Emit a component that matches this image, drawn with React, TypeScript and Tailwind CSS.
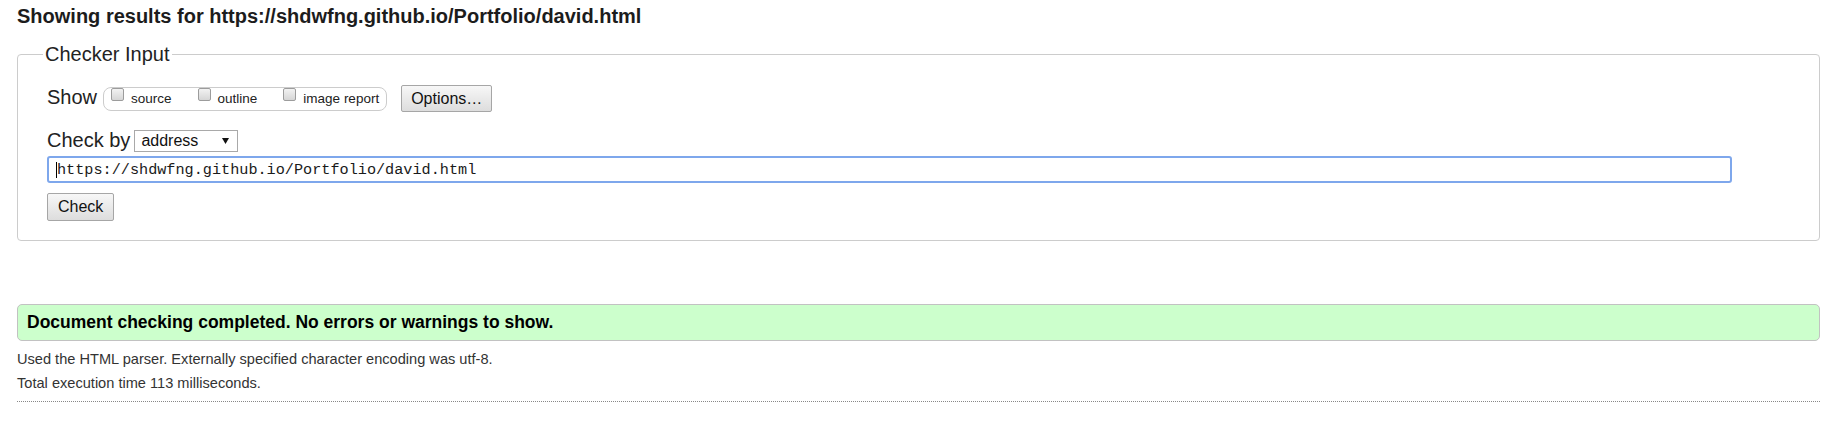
import React from "react"

const sans = { fontFamily: '"Liberation Sans", Arial, sans-serif' }

function FakeCheckbox() {
	return (
		<span className="block w-[13px] h-[13px] shrink-0 rounded-[2px] border border-[#9c9c9c] bg-gradient-to-b from-[#f2f2f2] to-[#d6d6d6]" />
	)
}

function ShowOption({ label, first }: { label: string; first?: boolean }) {
	return (
		<div className={`flex items-start ${first ? "" : "ml-[26px]"}`}>
			<FakeCheckbox />
			<span className="ml-[7px] text-[13.5px] leading-[22px] text-[#222]">{label}</span>
		</div>
	)
}

export default function App() {
	return (
		<div className="bg-white min-h-[427px] pl-[17px] pr-[16px] pt-[4px] text-[#222]" style={sans}>
			<h1 className="text-[20px] leading-[24px] font-bold text-[#1c1c1c]">
				Showing results for https://shdwfng.github.io/Portfolio/david.html
			</h1>

			{/* Checker input */}
			<fieldset className="mt-[14px] border border-[#cccccc] rounded-[4px] pl-[29px] pr-[20px] pt-0 pb-[19px] m-0">
				<legend className="-ml-[4px] px-[2px] text-[20px] leading-[24px] text-[#222]">Checker Input</legend>

				<div className="mt-[19px] flex items-start">
					<span className="text-[20px] leading-[24px]">Show</span>
					<div className="ml-[6px] mt-[2px] flex items-start h-[24px] border border-[#cccccc] rounded-[8px] pl-[7px] pr-[7px]">
						<ShowOption label="source" first />
						<ShowOption label="outline" />
						<ShowOption label="image report" />
					</div>
					<button className="ml-[14px] h-[27px] px-[9px] py-[2.5px] text-[16px] leading-[20px] text-[#111] border border-[#a6a6a6] rounded-[2px] bg-gradient-to-b from-[#f7f7f7] to-[#dddddd]">
						Options…
					</button>
				</div>

				<div className="mt-[16px] flex items-start">
					<span className="text-[20px] leading-[24px]">Check by</span>
					<div className="ml-[4px] mt-[2px] flex items-center w-[104px] h-[22px] border border-[#a9a9a9] bg-white pl-[6px]">
						<span className="text-[16px] leading-[20px] text-[#111]">address</span>
						<svg className="ml-auto mr-[8px]" width="7" height="6" viewBox="0 0 7 6" aria-hidden="true">
							<path d="M0 0h7L3.5 6z" fill="#111" />
						</svg>
					</div>
				</div>

				<div className="mt-[4px] flex items-center w-[1685px] h-[27px] border-2 border-[#7ea7ec] rounded-[3px] bg-white pl-[7px]">
					<span className="w-px h-[16px] bg-black shrink-0" />
					<span
						className="text-[15.2px] leading-[20px] text-[#1a1a1a]"
						style={{ fontFamily: '"Liberation Mono", "DejaVu Sans Mono", monospace' }}
					>
						https://shdwfng.github.io/Portfolio/david.html
					</span>
				</div>

				<button className="mt-[10px] block h-[28px] px-[10px] py-[3px] text-[16px] leading-[20px] text-[#111] border border-[#a6a6a6] rounded-[2px] bg-gradient-to-b from-[#f7f7f7] to-[#dddddd]">
					Check
				</button>
			</fieldset>

			{/* Result */}
			<div className="mt-[63px] border border-[#c2c2c2] rounded-[5px] bg-[#ccffcc] pl-[9px] py-[7px]">
				<p className="text-[17.5px] leading-[21px] font-bold text-black">
					Document checking completed. No errors or warnings to show.
				</p>
			</div>

			<p className="mt-[6px] text-[14.6px] leading-[24px] text-[#333]">
				Used the HTML parser. Externally specified character encoding was utf-8.
			</p>
			<p className="text-[14.6px] leading-[24px] text-[#333]">Total execution time 113 milliseconds.</p>
			<div className="mt-[6px] border-t border-dotted border-[#888]" />
		</div>
	)
}
